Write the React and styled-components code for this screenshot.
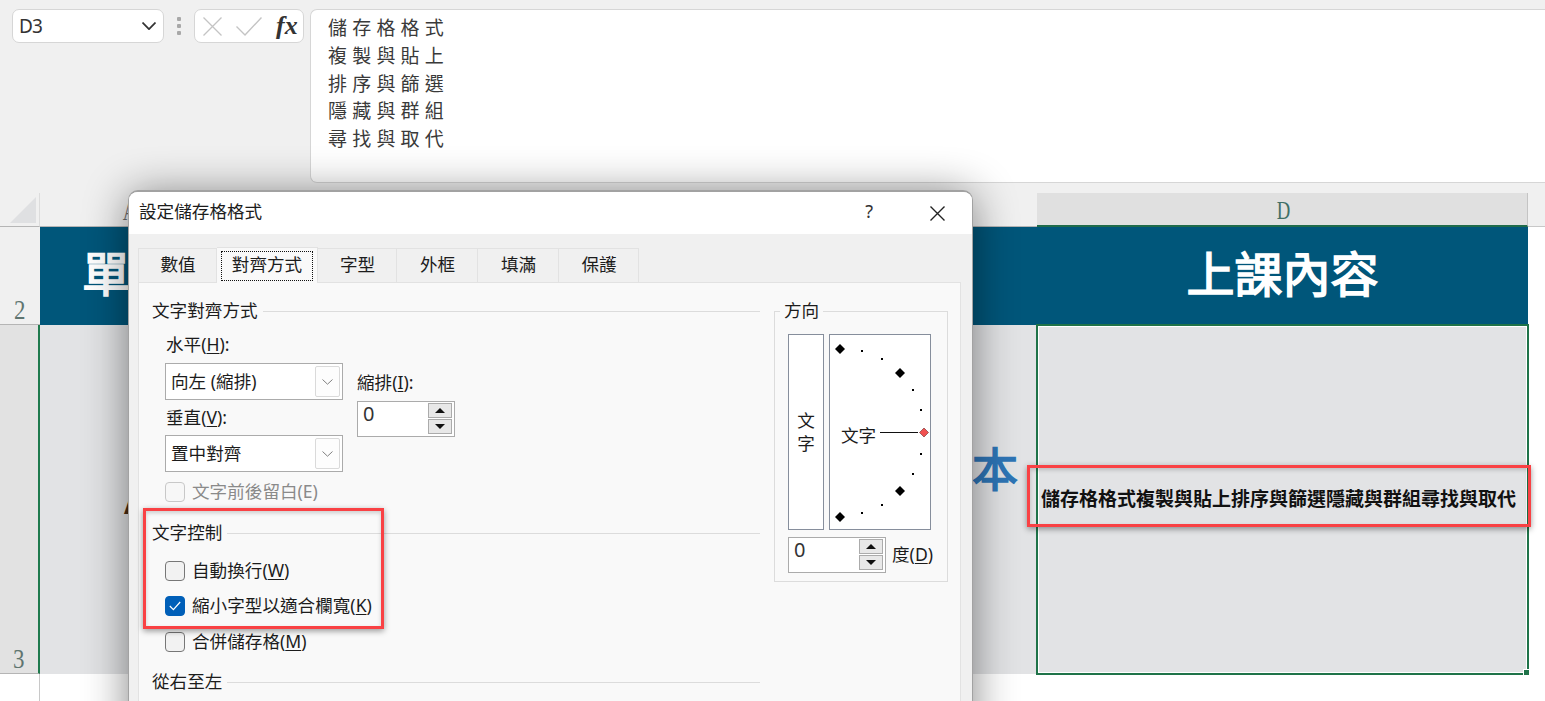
import React from "react";
import styled, { createGlobalStyle } from "styled-components";

const Global = createGlobalStyle`
  html, body { margin: 0; padding: 0; background: #fff; }
  #root { width: 1545px; height: 701px; }
`;

const cjk = `"Noto Sans", "Noto Sans CJK TC", sans-serif`;
const cjkOnly = `"Noto Sans CJK TC", sans-serif`;

const Page = styled.div`
  position: relative;
  width: 1545px;
  height: 701px;
  overflow: hidden;
  display: flex;
  flex-direction: column;
  font-family: ${cjk};
  color: #1a1a1a;
`;

/* ---------- formula bar ---------- */
const FormulaBar = styled.div`
  height: 193px;
  box-sizing: border-box;
  padding: 9px 0 0 12px;
  background: #f0f0f0;
  display: flex;
  align-items: flex-start;
`;
const NameBox = styled.div`
  width: 152px;
  height: 34px;
  box-sizing: border-box;
  background: #fff;
  border: 1px solid #d6d6d6;
  border-radius: 7px;
  display: flex;
  align-items: center;
  justify-content: space-between;
  padding: 0 7px 0 6px;
  font-size: 19px;
  letter-spacing: -0.8px;
  color: #333;
`;
const Grip = styled.div`
  width: 4px;
  height: 18px;
  margin: 8px 13px 0 13px;
  display: flex;
  flex-direction: column;
  justify-content: space-between;
  i { display: block; width: 4px; height: 4px; background: #a8a8a8; border-radius: 1px; }
`;
const FxBox = styled.div`
  width: 110px;
  height: 34px;
  box-sizing: border-box;
  background: #fff;
  border: 1px solid #d6d6d6;
  border-radius: 7px;
  display: flex;
  align-items: center;
  padding-left: 8px;
  gap: 14px;
  color: #c4c4c4;
  margin-right: 6px;
`;
const Fx = styled.span`
  font-family: "Liberation Serif", serif;
  font-style: italic;
  font-weight: 700;
  font-size: 26px;
  line-height: 30px;
  color: #333;
`;
const FormulaInput = styled.div`
  flex: 1;
  height: 174px;
  box-sizing: border-box;
  background: #fff;
  border: 1px solid #d6d6d6;
  border-right: none;
  border-radius: 7px 0 0 7px;
  padding: 3px 0 0 17px;
  font-family: ${cjkOnly};
  font-size: 19px;
  letter-spacing: 5.2px;
  line-height: 27.8px;
  color: #3a3a3a;
`;

/* ---------- sheet ---------- */
const Sheet = styled.div`
  flex: 1;
  display: grid;
  grid-template-columns: 40px 997px 491px 1fr;
  grid-template-rows: 34px 98px 349px 1fr;
`;
const Corner = styled.div`
  background: #f0f0f0;
  border-right: 1px solid #dcdcdc;
  border-bottom: 1px solid #b5b5b5;
  padding: 4px 0 0 10px;
  box-sizing: border-box;
`;
const ColumnHead = styled.div`
  box-sizing: border-box;
  display: flex;
  align-items: center;
  justify-content: ${(p) => (p.$selected ? "center" : "flex-start")};
  padding: 4px 0 0 ${(p) => (p.$selected ? "2px" : "80px")};
  background: ${(p) => (p.$selected ? "#e0e0e0" : "#f0f0f0")};
  border-bottom: ${(p) => (p.$selected ? "2px solid #1f6b4a" : "1px solid #b5b5b5")};
  border-right: ${(p) => (p.$selected ? "1px solid #c4c4c4" : "none")};
  color: ${(p) => (p.$selected ? "#3f6f66" : "#6a6a6a")};
  font-family: "Liberation Serif", serif;
  font-size: 26px;
  span { display: block; transform: scaleX(0.72); }
`;
const HeadFill = styled.div`
  background: #f0f0f0;
  border-bottom: 1px solid #c8c8c8;
`;
const RowHead = styled.div`
  box-sizing: border-box;
  display: flex;
  align-items: flex-end;
  justify-content: center;
  font-family: "Liberation Serif", serif;
  font-size: 27px;
  line-height: 28px;
  color: #5f7570;
  background: ${(p) => (p.$selected ? "#e2e2e2" : "#f0f0f0")};
  border-right: ${(p) => (p.$selected ? "2px solid #1f7a4d" : "none")};
  border-bottom: 1px solid #b5b5b5;
  span { display: block; transform: scaleX(0.85); }
`;
const BannerCell = styled.div`
  background: #00567a;
  color: #fff;
  display: flex;
  align-items: center;
  font-family: ${cjkOnly};
  font-weight: 400;
  font-size: 48px;
  -webkit-text-stroke: 1.6px #fff;
  justify-content: ${(p) => (p.$center ? "center" : "flex-start")};
  padding: 0 0 10px ${(p) => (p.$center ? "0" : "42px")};
`;
const BlankCell = styled.div`
  background: #fff;
`;
const BodyCell = styled.div`
  background: #e2e3e5;
  display: flex;
  align-items: center;
  justify-content: space-between;
  padding: 0 19px 0 84px;
`;
const BoldMark = styled.span`
  font-size: 44px;
  font-weight: 700;
  color: #4a2c14;
  margin-top: -6px;
`;
const BlueMark = styled.span`
  font-family: ${cjkOnly};
  font-size: 46px;
  font-weight: 400;
  -webkit-text-stroke: 1.6px #2e75b6;
  color: #2e75b6;
  margin-bottom: 68px;
`;
const SelectedCell = styled.div`
  position: relative;
  box-sizing: border-box;
  margin: -1px;
  background: #e2e3e5;
  border: 2px solid #1f7349;
  box-shadow: inset 0 0 0 1px #fff;
  display: flex;
  align-items: center;
  padding: 0 0 0 3px;
  font-family: ${cjkOnly};
  font-weight: 700;
  font-size: 19px;
  color: #111;
  white-space: nowrap;
`;
const CellText = styled.span`
  margin-bottom: 5px;
`;
const FillHandle = styled.i`
  position: absolute;
  right: -3px;
  bottom: -3px;
  width: 7px;
  height: 7px;
  background: #1f7349;
  border: 1px solid #fff;
  box-sizing: border-box;
`;
const BottomHead = styled.div`
  background: #fff;
  border-right: 1px solid #c8c8c8;
`;

/* ---------- dialog ---------- */
const Dialog = styled.div`
  position: absolute;
  left: 128px;
  top: 190px;
  width: 845px;
  height: 560px;
  box-sizing: border-box;
  background: #f0f0f0;
  border: 1px solid #a2a2a2;
  border-top-width: 2px;
  border-radius: 10px 10px 0 0;
  box-shadow: 0 4px 44px rgba(0, 0, 0, 0.48);
  overflow: hidden;
  font-family: ${cjk};
  font-size: 17.6px;
  color: #1c1c1c;
`;
const TitleBar = styled.div`
  height: 42px;
  background: #fff;
  display: flex;
  align-items: center;
  padding: 0 27px 0 10px;
`;
const TitleText = styled.div`
  flex: 1;
  margin-bottom: 6px;
`;
const HelpMark = styled.span`
  font-size: 18px;
  margin: 0 57px 4px 0;
  color: #333;
`;
const CloseGlyph = styled.span`
  display: flex;
  color: #222;
`;
const Tabs = styled.div`
  display: flex;
  margin: 14px 0 0 9px;
  position: relative;
  z-index: 1;
  height: 34px;
`;
const Tab = styled.div`
  box-sizing: border-box;
  width: ${(p) => p.$w}px;
  display: flex;
  align-items: center;
  justify-content: center;
  background: ${(p) => (p.$active ? "#f9f9f9" : "#f0f0f0")};
  border: 1px solid #e2e2e2;
  border-bottom: none;
  border-left: ${(p) => (p.$first ? "1px solid #e2e2e2" : "none")};
  height: ${(p) => (p.$active ? "36px" : "34px")};
  margin-top: ${(p) => (p.$active ? "-1px" : "0")};
  padding: ${(p) => (p.$active ? "0" : "0 0 4px 1px")};
`;
const FocusRect = styled.span`
  width: 92px;
  height: 30px;
  box-sizing: border-box;
  border: 1px dotted #111;
  display: flex;
  align-items: center;
  justify-content: center;
  padding-bottom: 4px;
`;
const Panel = styled.div`
  margin-left: 9px;
  width: 823px;
  height: 460px;
  box-sizing: border-box;
  background: #f9f9f9;
  border: 1px solid #e2e2e2;
  padding: 16px 0 0 13px;
  display: flex;
  align-items: flex-start;
  gap: 14px;
`;
const LeftCol = styled.div`
  width: 608px;
`;
const Section = styled.div`
  display: flex;
  align-items: center;
  height: 24px;
  margin-top: ${(p) => p.$mt || 0}px;
  gap: 5px;
  &::after {
    content: "";
    flex: 1;
    height: 1px;
    background: #dcdcdc;
  }
`;
const SectionText = styled.span`
  margin-bottom: 4px;
`;
const Label = styled.div`
  height: 24px;
  line-height: 22px;
  margin-top: ${(p) => p.$mt || 0}px;
  white-space: nowrap;
  u { text-underline-offset: 2px; }
`;
const Indented = styled.div`
  margin-left: 14px;
`;
const AlignGrid = styled.div`
  display: flex;
  align-items: flex-start;
  gap: 14px;
  margin-top: 6px;
`;
const IndentCol = styled.div`
  padding-top: 8px;
`;
const Select = styled.div`
  width: 178px;
  height: 37px;
  box-sizing: border-box;
  margin-left: -1px;
  margin-top: ${(p) => p.$mt || 0}px;
  background: #fff;
  border: 1px solid #ababab;
  display: flex;
  align-items: center;
  justify-content: space-between;
  padding: 2px 2px 2px 5px;
`;
const SelectText = styled.span`
  margin-bottom: 3px;
`;
const SelectButton = styled.span`
  width: 25px;
  height: 31px;
  box-sizing: border-box;
  border: 1px solid #dadada;
  border-radius: 2px;
  background: #fdfdfd;
  display: flex;
  align-items: center;
  justify-content: center;
  color: #808080;
`;
const NumberBox = styled.div`
  width: 98px;
  height: 36px;
  box-sizing: border-box;
  background: #fff;
  border: 1px solid #ababab;
  margin-top: ${(p) => p.$mt || 0}px;
  display: flex;
  justify-content: space-between;
  padding: 1px 2px 0 5px;
  font-size: 20px;
  line-height: 21px;
  color: #333;
`;
const Spinner = styled.div`
  width: 24px;
  display: flex;
  flex-direction: column;
  gap: 1px;
`;
const SpinButton = styled.span`
  height: 15px;
  box-sizing: border-box;
  background: #e8e8e8;
  border: 1px solid #ababab;
  display: flex;
  align-items: center;
  justify-content: center;
  &::after {
    content: "";
    width: 0;
    height: 0;
    border-left: 5px solid transparent;
    border-right: 5px solid transparent;
    ${(p) => (p.$down ? "border-top: 5px solid #111;" : "border-bottom: 5px solid #111;")}
  }
`;
const CheckRow = styled.div`
  display: flex;
  align-items: center;
  height: 24px;
  gap: 7px;
  margin-top: ${(p) => p.$mt || 0}px;
  margin-left: -1px;
  color: ${(p) => (p.$off ? "#8a8a8a" : "inherit")};
  white-space: nowrap;
  u { text-underline-offset: 2px; }
`;
const CheckText = styled.span`
  margin-bottom: 3px;
`;
const Box = styled.span`
  width: 20px;
  height: 20px;
  box-sizing: border-box;
  border-radius: 4px;
  border: 1px solid ${(p) => (p.$checked ? "#005fb8" : p.$off ? "#c8c8c8" : "#777")};
  background: ${(p) => (p.$checked ? "#005fb8" : p.$off ? "#f7f7f7" : "#f2f2f2")};
  display: flex;
  align-items: center;
  justify-content: center;
  color: #fff;
`;
const Orientation = styled.fieldset`
  margin: 0;
  width: 174px;
  box-sizing: border-box;
  border: 1px solid #dcdcdc;
  padding: 11px 13px 8px 13px;
  min-inline-size: 0;
`;
const OrientationLegend = styled.legend`
  padding: 0 4px;
  margin-left: -8px;
  height: 24px;
  line-height: 22px;
`;
const OrientationRow = styled.div`
  display: flex;
  gap: 5px;
`;
const VerticalBox = styled.div`
  width: 36px;
  height: 196px;
  box-sizing: border-box;
  background: #fff;
  border: 1px solid #868e9c;
  display: flex;
  flex-direction: column;
  align-items: center;
  justify-content: center;
  line-height: 23px;
`;
const Dial = styled.div`
  position: relative;
  width: 102px;
  height: 196px;
  box-sizing: border-box;
  background: #fff;
  border: 1px solid #868e9c;
  svg { display: block; }
`;
const DialLabel = styled.span`
  position: absolute;
  left: 11px;
  top: 88px;
  line-height: 24px;
`;
const DegreeRow = styled.div`
  display: flex;
  align-items: center;
  gap: 6px;
  margin-top: 7px;
`;
const DegreeText = styled.span`
  margin-bottom: 3px;
  u { text-underline-offset: 2px; }
`;

/* ---------- red call-outs ---------- */
const Callout = styled.div`
  position: absolute;
  left: ${(p) => p.$x}px;
  top: ${(p) => p.$y}px;
  width: ${(p) => p.$w}px;
  height: ${(p) => p.$h}px;
  box-sizing: border-box;
  border: 3px solid #f94144;
  box-shadow: 0 2px 6px rgba(0, 0, 0, 0.4), inset 0 2px 4px rgba(0, 0, 0, 0.18);
`;

/* ---------- icons ---------- */
function Cross({ size, width = 1.3 }) {
  return (
    <svg width={size} height={size} viewBox={`0 0 ${size} ${size}`} fill="none" stroke="currentColor" strokeWidth={width}>
      <path d={`M0.5 0.5 L${size - 0.5} ${size - 0.5} M${size - 0.5} 0.5 L0.5 ${size - 0.5}`} />
    </svg>
  );
}
function Tick() {
  return (
    <svg width="26" height="19" viewBox="0 0 26 19" fill="none" stroke="currentColor" strokeWidth="1.4">
      <path d="M0.5 9.5 L9 18 L25.5 0.5" />
    </svg>
  );
}
function Chevron({ w, h, width, color = "currentColor" }) {
  return (
    <svg width={w} height={h} viewBox={`0 0 ${w} ${h}`} fill="none" stroke={color} strokeWidth={width}>
      <path d={`M0.5 0.5 L${w / 2} ${h - 0.8} L${w - 0.5} 0.5`} />
    </svg>
  );
}
function SmallTick() {
  return (
    <svg width="12" height="10" viewBox="0 0 12 10" fill="none" stroke="currentColor" strokeWidth="1.2">
      <path d="M0.8 5 L4.4 8.6 L11.2 1" />
    </svg>
  );
}

const diamond = (x, y, r = 5) => `${x},${y - r} ${x + r},${y} ${x},${y + r} ${x - r},${y}`;
const bigTicks = [[10, 14], [70, 38], [70, 156], [10, 182]];
const smallTicks = [[32, 16], [52, 24], [83, 55], [91, 75], [91, 119], [83, 139], [52, 170], [32, 178]];

function DialDrawing() {
  return (
    <svg width="100" height="194" viewBox="0 0 100 194">
      {bigTicks.map(([x, y]) => (
        <polygon key={`${x}-${y}`} points={diamond(x, y)} fill="#000" />
      ))}
      {smallTicks.map(([x, y]) => (
        <rect key={`${x}-${y}`} x={x - 1} y={y - 1} width="2" height="2" fill="#000" />
      ))}
      <line x1="50" y1="97.5" x2="88" y2="97.5" stroke="#111" strokeWidth="1" />
      <polygon points={diamond(94, 97.5, 4.5)} fill="#f05050" stroke="#6b2a2a" strokeWidth="0.6" />
    </svg>
  );
}

function DropButton() {
  return (
    <SelectButton>
      <Chevron w={11} h={6} width={1} />
    </SelectButton>
  );
}

function Spin() {
  return (
    <Spinner>
      <SpinButton />
      <SpinButton $down />
    </Spinner>
  );
}

const tabs = [
  ["數值", 79],
  ["對齊方式", 101, true],
  ["字型", 79],
  ["外框", 81],
  ["填滿", 81],
  ["保護", 80],
];

const formula = ["儲存格格式", "複製與貼上", "排序與篩選", "隱藏與群組", "尋找與取代"];

export default function App() {
  return (
    <Page>
      <Global />
      <FormulaBar>
        <NameBox>
          D3
          <Chevron w={14} h={8} width={1.7} color="#333" />
        </NameBox>
        <Grip><i /><i /><i /></Grip>
        <FxBox>
          <Cross size={19} />
          <Tick />
          <Fx>fx</Fx>
        </FxBox>
        <FormulaInput>
          {formula.map((line) => (
            <div key={line}>{line}</div>
          ))}
        </FormulaInput>
      </FormulaBar>

      <Sheet>
        <Corner>
          <svg width="26" height="26" viewBox="0 0 26 26">
            <polygon points="26,0 26,26 0,26" fill="#dfe0e2" />
          </svg>
        </Corner>
        <ColumnHead><span>A</span></ColumnHead>
        <ColumnHead $selected><span>D</span></ColumnHead>
        <HeadFill />

        <RowHead><span>2</span></RowHead>
        <BannerCell>單</BannerCell>
        <BannerCell $center>上課內容</BannerCell>
        <BlankCell />

        <RowHead $selected><span>3</span></RowHead>
        <BodyCell>
          <BoldMark>A</BoldMark>
          <BlueMark>本</BlueMark>
        </BodyCell>
        <SelectedCell>
          <CellText>儲存格格式複製與貼上排序與篩選隱藏與群組尋找與取代</CellText>
          <FillHandle />
        </SelectedCell>
        <BlankCell />

        <BottomHead />
        <BlankCell />
        <BlankCell />
        <BlankCell />
      </Sheet>

      <Dialog>
        <TitleBar>
          <TitleText>設定儲存格格式</TitleText>
          <HelpMark>?</HelpMark>
          <CloseGlyph><Cross size={15} width={1.4} /></CloseGlyph>
        </TitleBar>
        <Tabs>
          {tabs.map(([name, w, active], i) => (
            <Tab key={name} $w={w} $active={active} $first={i === 0}>
              {active ? <FocusRect>{name}</FocusRect> : name}
            </Tab>
          ))}
        </Tabs>
        <Panel>
          <LeftCol>
            <Section><SectionText>文字對齊方式</SectionText></Section>
            <Indented>
              <Label $mt={10}>水平(<u>H</u>):</Label>
              <AlignGrid>
                <div>
                  <Select><SelectText>向左 (縮排)</SelectText><DropButton /></Select>
                  <Label $mt={6}>垂直(<u>V</u>):</Label>
                  <Select $mt={5}><SelectText>置中對齊</SelectText><DropButton /></Select>
                </div>
                <IndentCol>
                  <Label>縮排(<u>I</u>):</Label>
                  <NumberBox $mt={6}>0<Spin /></NumberBox>
                </IndentCol>
              </AlignGrid>
              <CheckRow $mt={8} $off>
                <Box $off /><CheckText>文字前後留白(E)</CheckText>
              </CheckRow>
            </Indented>
            <Section $mt={17}><SectionText>文字控制</SectionText></Section>
            <Indented>
              <CheckRow $mt={14}>
                <Box /><CheckText>自動換行(<u>W</u>)</CheckText>
              </CheckRow>
              <CheckRow $mt={11}>
                <Box $checked><SmallTick /></Box><CheckText>縮小字型以適合欄寬(<u>K</u>)</CheckText>
              </CheckRow>
              <CheckRow $mt={12}>
                <Box /><CheckText>合併儲存格(<u>M</u>)</CheckText>
              </CheckRow>
            </Indented>
            <Section $mt={16}><SectionText>從右至左</SectionText></Section>
          </LeftCol>
          <Orientation>
            <OrientationLegend>方向</OrientationLegend>
            <OrientationRow>
              <VerticalBox>
                <span>文</span>
                <span>字</span>
              </VerticalBox>
              <Dial>
                <DialDrawing />
                <DialLabel>文字</DialLabel>
              </Dial>
            </OrientationRow>
            <DegreeRow>
              <NumberBox>0<Spin /></NumberBox>
              <DegreeText>度(<u>D</u>)</DegreeText>
            </DegreeRow>
          </Orientation>
        </Panel>
      </Dialog>

      <Callout $x={143} $y={508} $w={241} $h={121} />
      <Callout $x={1027} $y={465} $w={504} $h={62} />
    </Page>
  );
}
